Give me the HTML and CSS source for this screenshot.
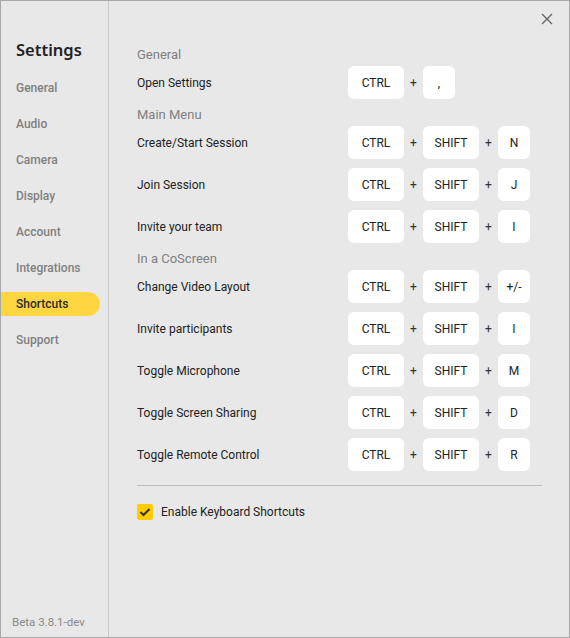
FILE: index.html
```html
<!DOCTYPE html>
<html>
<head>
<meta charset="utf-8">
<link rel="stylesheet" href="styles.css">
</head>
<body>
<div class="window">
  <aside class="sidebar">
    <h1 class="title">Settings</h1>
    <nav class="nav">
      <div class="nav-item">General</div>
      <div class="nav-item">Audio</div>
      <div class="nav-item">Camera</div>
      <div class="nav-item">Display</div>
      <div class="nav-item">Account</div>
      <div class="nav-item">Integrations</div>
      <div class="nav-item active">Shortcuts</div>
      <div class="nav-item">Support</div>
    </nav>
    <div class="version">Beta 3.8.1-dev</div>
  </aside>
  <main class="content">
    <button class="close" aria-label="Close">
      <svg width="12" height="12" viewBox="0 0 12 12"><path d="M1 1L11 11M11 1L1 11" stroke="#666" stroke-width="1.4" fill="none"/></svg>
    </button>
    <h2 class="section">General</h2>
    <div class="row">
      <span class="label">Open Settings</span>
      <div class="keys"><span class="key">CTRL</span><span class="plus">+</span><span class="key small">,</span></div>
    </div>
    <h2 class="section">Main Menu</h2>
    <div class="row">
      <span class="label">Create/Start Session</span>
      <div class="keys"><span class="key">CTRL</span><span class="plus">+</span><span class="key">SHIFT</span><span class="plus">+</span><span class="key small">N</span></div>
    </div>
    <div class="row">
      <span class="label">Join Session</span>
      <div class="keys"><span class="key">CTRL</span><span class="plus">+</span><span class="key">SHIFT</span><span class="plus">+</span><span class="key small">J</span></div>
    </div>
    <div class="row">
      <span class="label">Invite your team</span>
      <div class="keys"><span class="key">CTRL</span><span class="plus">+</span><span class="key">SHIFT</span><span class="plus">+</span><span class="key small">I</span></div>
    </div>
    <h2 class="section">In a CoScreen</h2>
    <div class="row">
      <span class="label">Change Video Layout</span>
      <div class="keys"><span class="key">CTRL</span><span class="plus">+</span><span class="key">SHIFT</span><span class="plus">+</span><span class="key small">+/-</span></div>
    </div>
    <div class="row">
      <span class="label">Invite participants</span>
      <div class="keys"><span class="key">CTRL</span><span class="plus">+</span><span class="key">SHIFT</span><span class="plus">+</span><span class="key small">I</span></div>
    </div>
    <div class="row">
      <span class="label">Toggle Microphone</span>
      <div class="keys"><span class="key">CTRL</span><span class="plus">+</span><span class="key">SHIFT</span><span class="plus">+</span><span class="key small">M</span></div>
    </div>
    <div class="row">
      <span class="label">Toggle Screen Sharing</span>
      <div class="keys"><span class="key">CTRL</span><span class="plus">+</span><span class="key">SHIFT</span><span class="plus">+</span><span class="key small">D</span></div>
    </div>
    <div class="row">
      <span class="label">Toggle Remote Control</span>
      <div class="keys"><span class="key">CTRL</span><span class="plus">+</span><span class="key">SHIFT</span><span class="plus">+</span><span class="key small">R</span></div>
    </div>
    <hr class="divider">
    <label class="check">
      <span class="box"><svg width="12" height="10" viewBox="0 0 12 10"><path d="M1.5 5L4.5 8L10.5 2" stroke="#333" stroke-width="2" fill="none"/></svg></span>
      <span>Enable Keyboard Shortcuts</span>
    </label>
  </main>
</div>
</body>
</html>
```
FILE: styles.css
```css
* { box-sizing: border-box; }
html, body { margin: 0; padding: 0; }
body {
  width: 570px;
  height: 638px;
  font-family: "Roboto", "Noto Sans", sans-serif;
  background: #e8e8e8;
  color: #2a2a2a;
}
.window {
  display: flex;
  width: 570px;
  height: 638px;
  border: 1px solid #a8a8a8;
  background: #e8e8e8;
}
.sidebar {
  width: 108px;
  border-right: 1px solid #c9c9c9;
  display: flex;
  flex-direction: column;
  padding-top: 38px;
}
.title {
  margin: 0 0 15px 15px;
  font-family: "Noto Sans", sans-serif;
  font-size: 16.5px;
  font-weight: 600;
  color: #222;
  line-height: 22px;
}
.nav { display: flex; flex-direction: column; gap: 12px; }
.nav-item {
  height: 24px;
  line-height: 24px;
  padding-left: 15px;
  font-size: 12px;
  font-weight: 500;
  color: #808080;
  width: 99px;
  border-radius: 0 12px 12px 0;
}
.nav-item.active {
  background: #ffd541;
  color: #2a2a2a;
}
.version {
  margin-top: auto;
  padding: 0 0 8px 11px;
  font-size: 11.5px;
  color: #8a8a8a;
}
.content {
  flex: 1;
  position: relative;
  padding: 38px 27px 0 28px;
}
.close {
  position: absolute;
  top: 11px;
  right: 15px;
  border: 0;
  background: none;
  padding: 0;
  width: 14px;
  height: 14px;
  display: flex;
  align-items: center;
  justify-content: center;
}
.section {
  margin: 7px 0 0 0;
  font-size: 13px;
  font-weight: 400;
  color: #808080;
  line-height: 18px;
  height: 18px;
}
.row {
  display: flex;
  align-items: center;
  justify-content: space-between;
  height: 33px;
  margin-top: 9px;
  padding-right: 12px;
}
.section + .row { margin-top: 2px; }
.label { font-size: 12px; color: #222; }
.keys { display: flex; align-items: center; width: 182px; }
.key {
  background: #fff;
  border-radius: 6px;
  width: 56px;
  height: 33px;
  display: flex;
  align-items: center;
  justify-content: center;
  font-size: 12px;
  color: #222;
}
.key.small { width: 32px; }
.plus {
  width: 19px;
  text-align: center;
  font-size: 12px;
  color: #333;
}
.divider {
  border: 0;
  border-top: 1px solid #bcbcbc;
  margin: 14px 0 0 0;
}
.check {
  display: flex;
  align-items: center;
  gap: 8px;
  margin-top: 18px;
  font-size: 12px;
  color: #222;
}
.box {
  width: 16px;
  height: 16px;
  background: #ffcc00;
  border-radius: 2px;
  display: flex;
  align-items: center;
  justify-content: center;
}
```
